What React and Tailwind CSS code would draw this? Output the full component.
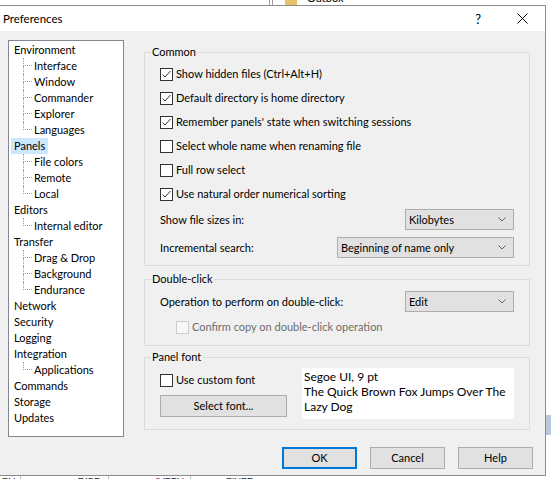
import React from 'react';

const font = "font-['Segoe_UI','Lato','Noto_Sans',sans-serif]";

const tree = [
  { label: 'Environment', children: ['Interface', 'Window', 'Commander', 'Explorer', 'Languages'] },
  { label: 'Panels', selected: true, children: ['File colors', 'Remote', 'Local'] },
  { label: 'Editors', children: ['Internal editor'] },
  { label: 'Transfer', children: ['Drag & Drop', 'Background', 'Endurance'] },
  { label: 'Network' },
  { label: 'Security' },
  { label: 'Logging' },
  { label: 'Integration', children: ['Applications'] },
  { label: 'Commands' },
  { label: 'Storage' },
  { label: 'Updates' },
];

function Check({ checked, disabled }) {
  return (
    <span
      className={`w-[13px] h-[13px] shrink-0 flex items-center justify-center border ${
        disabled ? 'border-[#cccccc] bg-[#f7f7f7]' : 'border-[#333333] bg-white'
      }`}
    >
      {checked && (
        <svg width="11" height="11" viewBox="0 0 11 11">
          <path d="M1.5 5.5 L4 8 L9.5 2" fill="none" stroke="#333333" strokeWidth="1" />
        </svg>
      )}
    </span>
  );
}

function CheckRow({ label, checked, disabled, className = '' }) {
  return (
    <div className={`h-[24px] flex items-center gap-[3px] ${className}`}>
      <Check checked={checked} disabled={disabled} />
      <span className={disabled ? 'text-[#6d6d6d]' : 'text-black'}>{label}</span>
    </div>
  );
}

function Select({ value, width }) {
  return (
    <div
      className={`h-[21px] ${width} shrink-0 bg-[#e1e1e1] border border-[#adadad] flex items-center justify-between pl-[3px] pr-[7px]`}
    >
      <span>{value}</span>
      <svg width="8" height="5" viewBox="0 0 8 5">
        <path d="M0.5 0.5 L4 4 L7.5 0.5" fill="none" stroke="#606060" strokeWidth="1" />
      </svg>
    </div>
  );
}

function Group({ title, className = '', children }) {
  return (
    <fieldset className={`border border-[#dcdcdc] m-0 p-0 min-w-0 ${className}`}>
      <legend className="ml-[6px] px-[1px] leading-[16px] p-0">{title}</legend>
      {children}
    </fieldset>
  );
}

function TreeChild({ label, last }) {
  return (
    <div className="h-[16px] flex items-center pl-[14px]">
      <span className="w-[9px] h-[16px] flex flex-col shrink-0">
        <span className="h-[8px] border-l border-b border-dotted border-[#a0a0a0]" />
        <span className={`h-[8px] ${last ? '' : 'border-l border-dotted border-[#a0a0a0]'}`} />
      </span>
      <span className="ml-[2px]">{label}</span>
    </div>
  );
}

function Tree() {
  return (
    <div className="w-[116px] h-[397px] shrink-0 bg-white border border-[#828790] pt-[1px]">
      {tree.map((node) => (
        <div key={node.label}>
          <div className="h-[16px] flex items-center pl-[2px]">
            <span className={`h-[16px] leading-[16px] px-[3px] ${node.selected ? 'bg-[#cce8ff]' : ''}`}>
              {node.label}
            </span>
          </div>
          {node.children &&
            node.children.map((c, i) => (
              <TreeChild key={c} label={c} last={i === node.children.length - 1} />
            ))}
        </div>
      ))}
    </div>
  );
}

function Button({ children, primary, className = '' }) {
  return (
    <button
      className={`w-[75px] h-[22px] bg-[#e1e1e1] flex items-center justify-center ${
        primary ? 'border-2 border-[#0078d7]' : 'border border-[#adadad]'
      } ${className}`}
    >
      {children}
    </button>
  );
}

export default function App() {
  return (
    <div className={`w-[551px] h-[479px] bg-white overflow-hidden flex flex-col text-[11px] leading-[16px] text-black ${font}`}>
      {/* window behind */}
      <div className="h-[5px] shrink-0 flex items-end overflow-hidden">
        <span className="ml-[269px] w-[1px] h-[5px] bg-[#a0a0a0]" />
        <span className="ml-[2px] w-[1px] h-[5px] bg-[#a0a0a0]" />
        <span className="ml-[12px] w-[12px] h-[5px] bg-[#e8c36b]" />
        <span className="ml-[10px] leading-[14px] mt-[-9px] h-[14px] self-start">Outbox</span>
      </div>

      <div className="flex flex-1 min-h-0">
        {/* dialog */}
        <div className="w-[546px] h-[471px] shrink-0 flex flex-col border-t border-r border-b border-[#8c8c8c] bg-[#f0f0f0]">
          <div className="h-[25px] shrink-0 bg-white flex items-center pl-[3px]">
            <span className="flex-1 text-[11.5px]">Preferences</span>
            <span className="text-[13px] mr-[36px]">?</span>
            <svg width="11" height="11" viewBox="0 0 11 11" className="mr-[17px]">
              <path d="M0.5 0.5 L10.5 10.5 M10.5 0.5 L0.5 10.5" stroke="#000" strokeWidth="1" />
            </svg>
          </div>

          <div className="flex pl-[8px] pt-[9px]">
            <Tree />
            <div className="ml-[20px] mt-[4px] w-[386px] flex flex-col">
              <Group title="Common" className="pb-[7px]">
                <div className="pl-[15px] pr-[15px] pt-[2px]">
                  <CheckRow label="Show hidden files (Ctrl+Alt+H)" checked />
                  <CheckRow label="Default directory is home directory" checked />
                  <CheckRow label="Remember panels' state when switching sessions" checked />
                  <CheckRow label="Select whole name when renaming file" />
                  <CheckRow label="Full row select" />
                  <CheckRow label="Use natural order numerical sorting" checked />
                  <div className="mt-[3px] flex items-center justify-between">
                    <span>Show file sizes in:</span>
                    <Select value="Kilobytes" width="w-[109px]" />
                  </div>
                  <div className="mt-[7px] flex items-center justify-between">
                    <span>Incremental search:</span>
                    <Select value="Beginning of name only" width="w-[177px]" />
                  </div>
                </div>
              </Group>

              <Group title="Double-click" className="mt-[5px] pb-[6px]">
                <div className="pl-[15px] pr-[15px] pt-[4px]">
                  <div className="flex items-center justify-between">
                    <span>Operation to perform on double-click:</span>
                    <Select value="Edit" width="w-[109px]" />
                  </div>
                  <CheckRow label="Confirm copy on double-click operation" disabled className="mt-[3px] pl-[16px]" />
                </div>
              </Group>

              <Group title="Panel font" className="mt-[3px] pb-[10px]">
                <div className="pl-[15px] pr-[15px] pt-[3px] flex items-start">
                  <div className="w-[127px] shrink-0 flex flex-col">
                    <CheckRow label="Use custom font" />
                    <Button className="mt-[3px] w-[127px]">Select font...</Button>
                  </div>
                  <div className="ml-[15px] flex-1 h-[51px] bg-white pl-[2px] pt-[1px] leading-[15px] text-[12px]">
                    Segoe UI, 9 pt
                    <br />
                    The Quick Brown Fox Jumps Over The Lazy Dog
                  </div>
                </div>
              </Group>
            </div>
          </div>

          <div className="mt-[10px] flex justify-end gap-[13px] pr-[12px]">
            <Button primary>OK</Button>
            <Button>Cancel</Button>
            <Button>Help</Button>
          </div>
        </div>

        {/* right edge of window behind */}
        <div className="flex-1 flex flex-col bg-white">
          <div className="h-[410px]" />
          <div className="h-[20px] bg-[#b9c9da]" />
        </div>
      </div>

      <div className="h-[3px] shrink-0 flex items-start overflow-hidden text-[#1a1a40]">
        <span className="ml-[2px] leading-[12px] mt-[-1px] text-[10px]">EN</span>
        <span className="ml-[5px] w-[1px] h-[3px] bg-[#c0c0c0]" />
        <span className="ml-[56px] leading-[12px] mt-[-1px] text-[10px]">DIRE</span>
        <span className="ml-[8px] w-[1px] h-[3px] bg-[#c0c0c0]" />
        <span className="ml-[45px] leading-[12px] mt-[-1px] text-[10px]">JVEEN</span>
        <span className="ml-[6px] w-[1px] h-[3px] bg-[#c0c0c0]" />
        <span className="ml-[35px] leading-[12px] mt-[-1px] text-[10px]">FIXED</span>
      </div>
    </div>
  );
}
